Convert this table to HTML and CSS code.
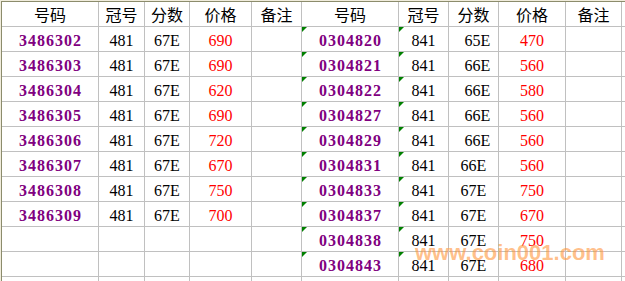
FILE: index.html
```html
<!DOCTYPE html>
<html lang="zh">
<head>
<meta charset="utf-8">
<title>号码价格表</title>
<link rel="stylesheet" href="styles.css">
</head>
<body>
<div class="frame">
  <div class="sheet">
    <div class="hd">号码</div><div class="hd">冠号</div><div class="hd">分数</div><div class="hd">价格</div><div class="hd">备注</div>
    <div class="hd">号码</div><div class="hd">冠号</div><div class="hd">分数</div><div class="hd">价格</div><div class="hd">备注</div><div class="c"></div>

    <div class="c no">3486302</div><div class="c">481</div><div class="c">67E</div><div class="c pr">690</div><div class="c"></div>
    <div class="c no tri">0304820</div><div class="c tri">841</div><div class="c sh">65E</div><div class="c pr">470</div><div class="c"></div><div class="c"></div>

    <div class="c no">3486303</div><div class="c">481</div><div class="c">67E</div><div class="c pr">690</div><div class="c"></div>
    <div class="c no tri">0304821</div><div class="c tri">841</div><div class="c sh">66E</div><div class="c pr">560</div><div class="c"></div><div class="c"></div>

    <div class="c no">3486304</div><div class="c">481</div><div class="c">67E</div><div class="c pr">620</div><div class="c"></div>
    <div class="c no tri">0304822</div><div class="c tri">841</div><div class="c sh">66E</div><div class="c pr">580</div><div class="c"></div><div class="c"></div>

    <div class="c no">3486305</div><div class="c">481</div><div class="c">67E</div><div class="c pr">690</div><div class="c"></div>
    <div class="c no tri">0304827</div><div class="c tri">841</div><div class="c sh">66E</div><div class="c pr">560</div><div class="c"></div><div class="c"></div>

    <div class="c no">3486306</div><div class="c">481</div><div class="c">67E</div><div class="c pr">720</div><div class="c"></div>
    <div class="c no tri">0304829</div><div class="c tri">841</div><div class="c sh">66E</div><div class="c pr">560</div><div class="c"></div><div class="c"></div>

    <div class="c no">3486307</div><div class="c">481</div><div class="c">67E</div><div class="c pr">670</div><div class="c"></div>
    <div class="c no tri">0304831</div><div class="c tri">841</div><div class="c">66E</div><div class="c pr">560</div><div class="c"></div><div class="c"></div>

    <div class="c no">3486308</div><div class="c">481</div><div class="c">67E</div><div class="c pr">750</div><div class="c"></div>
    <div class="c no tri">0304833</div><div class="c tri">841</div><div class="c">67E</div><div class="c pr">750</div><div class="c"></div><div class="c"></div>

    <div class="c no">3486309</div><div class="c">481</div><div class="c">67E</div><div class="c pr">700</div><div class="c"></div>
    <div class="c no tri">0304837</div><div class="c tri">841</div><div class="c">67E</div><div class="c pr">670</div><div class="c"></div><div class="c"></div>

    <div class="c"></div><div class="c"></div><div class="c"></div><div class="c"></div><div class="c"></div>
    <div class="c no tri">0304838</div><div class="c tri">841</div><div class="c">67E</div><div class="c pr">750</div><div class="c"></div><div class="c"></div>

    <div class="c"></div><div class="c"></div><div class="c"></div><div class="c"></div><div class="c"></div>
    <div class="c no tri">0304843</div><div class="c tri">841</div><div class="c">67E</div><div class="c pr">680</div><div class="c"></div><div class="c"></div>

    <div class="c"></div><div class="c"></div><div class="c"></div><div class="c"></div><div class="c"></div>
    <div class="c"></div><div class="c"></div><div class="c"></div><div class="c"></div><div class="c"></div><div class="c"></div>
  </div>
  <div class="watermark">www.coin001.com</div>
</div>
</body>
</html>
```

FILE: styles.css
```css
html, body {
  margin: 0;
  padding: 0;
  overflow: hidden;
  background: #ffffff;
}

.frame {
  position: relative;
  width: 625px;
  height: 281px;
  overflow: hidden;
  background: #f0ecdc;
  padding: 1px 0 0 1px;
  box-sizing: border-box;
}

.sheet {
  display: grid;
  grid-template-columns: 96px 45px 44px 61px 49px 96px 49px 49px 66px 55px 3px;
  grid-auto-rows: 24px;
  gap: 1px;
  background: #c0c0c0;
  border-top: 1px solid #8c8c6c;
  border-left: 1px solid #8c8c6c;
  font-family: "Liberation Serif", "Noto Sans CJK SC", serif;
  font-size: 16px;
  color: #000000;
}

.hd {
  background: #ffffff;
  text-align: center;
  font-family: "Noto Sans CJK SC", sans-serif;
  font-size: 16px;
  line-height: 24px;
  white-space: nowrap;
  overflow: hidden;
}

.c {
  position: relative;
  background: #ffffff;
  text-align: center;
  line-height: 20px;
  padding-top: 4px;
  white-space: nowrap;
  overflow: hidden;
}

.no {
  color: #800080;
  font-weight: bold;
  letter-spacing: 1px;
  padding-left: 1px;
}

.pr {
  color: #ff0000;
}

.sh {
  padding-left: 8px;
}

.tri::before {
  content: "";
  position: absolute;
  left: 0;
  top: 0;
  width: 0;
  height: 0;
  border-top: 5px solid #008000;
  border-right: 5px solid transparent;
}

.watermark {
  position: absolute;
  left: 415px;
  top: 240px;
  font-family: "Liberation Sans", Arial, sans-serif;
  font-weight: bold;
  font-size: 22px;
  line-height: 26px;
  color: rgba(255, 150, 60, 0.6);
  white-space: nowrap;
}
```
